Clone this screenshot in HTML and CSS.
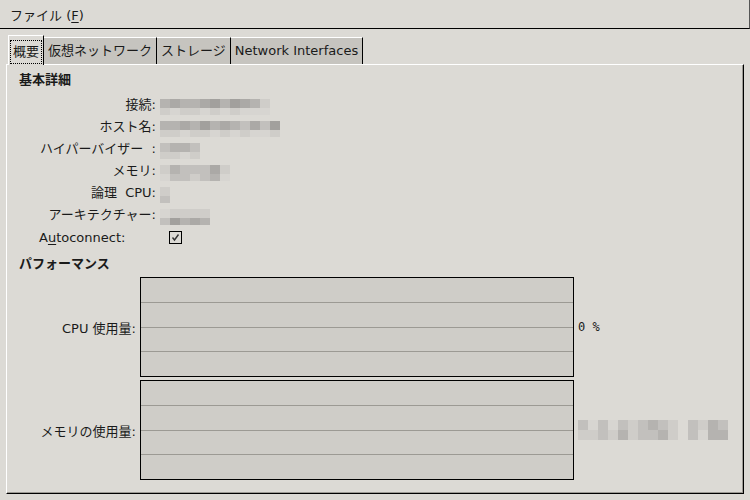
FILE: index.html
```html
<!DOCTYPE html>
<html lang="ja">
<head>
  <meta charset="UTF-8">
  <title>概要</title>
  <link rel="stylesheet" href="styles.css">
</head>
<body>
  <!-- メニューバー -->
  <div class="menubar">
    <span class="menu-item">ファイル (<u>F</u>)</span>
  </div>

  <!-- タブ -->
  <div class="tabs">
    <div class="tab active"><span class="focus">概要</span></div>
    <div class="tab">仮想ネットワーク</div>
    <div class="tab">ストレージ</div>
    <div class="tab">Network Interfaces</div>
  </div>

  <div class="panel">
    <div class="section-title">基本詳細</div>

    <div class="details">
      <div class="label">接続:</div>
      <div class="value">
        <span class="blur">
          <span class="row"><i class="p3"></i><i class="p4"></i><i class="p3"></i><i class="p3"></i><i class="p4"></i><i class="p5"></i><i class="p3"></i><i class="p5"></i><i class="p4"></i><i class="p3"></i><i class="p1"></i></span>
          <span class="row"><i class="p1"></i><i class="p0"></i><i class="p1"></i><i class="p1"></i><i class="p0"></i><i class="p1"></i><i class="p0"></i><i class="p1"></i><i class="p0"></i><i class="p0"></i><i class="p0"></i></span>
        </span>
      </div>

      <div class="label">ホスト名:</div>
      <div class="value">
        <span class="blur">
          <span class="row"><i class="p3"></i><i class="p3"></i><i class="p4"></i><i class="p3"></i><i class="p5"></i><i class="p3"></i><i class="p4"></i><i class="p3"></i><i class="p2"></i><i class="p4"></i><i class="p2"></i><i class="p5"></i></span>
          <span class="row"><i class="p1"></i><i class="p1"></i><i class="p0"></i><i class="p1"></i><i class="p1"></i><i class="p0"></i><i class="p1"></i><i class="p0"></i><i class="p1"></i><i class="p0"></i><i class="p0"></i><i class="p1"></i></span>
        </span>
      </div>

      <div class="label">ハイパーバイザー&nbsp; :</div>
      <div class="value">
        <span class="blur">
          <span class="row"><i class="p2"></i><i class="p3"></i><i class="p3"></i><i class="p2"></i></span>
          <span class="row"><i class="p1"></i><i class="p1"></i><i class="p0"></i><i class="p1"></i></span>
        </span>
      </div>

      <div class="label">メモリ:</div>
      <div class="value">
        <span class="blur">
          <span class="row"><i class="p1"></i><i class="p3"></i><i class="p2"></i><i class="p2"></i><i class="p2"></i><i class="p4"></i><i class="p1"></i></span>
          <span class="row"><i class="p0"></i><i class="p2"></i><i class="p2"></i><i class="p1"></i><i class="p2"></i><i class="p3"></i><i class="p0"></i></span>
        </span>
      </div>

      <div class="label">論理&nbsp; CPU:</div>
      <div class="value">
        <span class="blur">
          <span class="row"><i class="p1"></i></span>
          <span class="row"><i class="p2"></i></span>
        </span>
      </div>

      <div class="label">アーキテクチャー:</div>
      <div class="value">
        <span class="blur">
          <span class="row"><i class="p0"></i><i class="p1"></i><i class="p1"></i><i class="p1"></i><i class="p1"></i></span>
          <span class="row"><i class="p2"></i><i class="p5"></i><i class="p3"></i><i class="p4"></i><i class="p3"></i></span>
        </span>
      </div>
    </div>

    <div class="autoconnect">
      <span class="auto-label">A<u>u</u>toconnect:</span>
      <span class="checkbox">
        <svg width="11" height="11" viewBox="0 0 11 11">
          <polyline points="2.5,5.5 4.5,8 8.5,2.5" fill="none" stroke="#333" stroke-width="1.4"/>
        </svg>
      </span>
    </div>

    <div class="section-title perf-title">パフォーマンス</div>

    <div class="perf">
      <div class="label">CPU 使用量:</div>
      <div class="graph">
        <div class="band"></div><div class="band"></div><div class="band"></div><div class="band"></div>
      </div>
      <div class="perf-value mono">0 %</div>

      <div class="label">メモリの使用量:</div>
      <div class="graph">
        <div class="band"></div><div class="band"></div><div class="band"></div><div class="band"></div>
      </div>
      <div class="perf-value">
        <span class="blur tall">
          <span class="row"><i class="p2"></i><i class="p0"></i><i class="p2"></i><i class="p0"></i><i class="p2"></i><i class="p1"></i><i class="p2"></i><i class="p3"></i><i class="p2"></i><i class="p1"></i><i class="gap"></i><i class="p2"></i><i class="p1"></i><i class="p3"></i><i class="p2"></i></span>
          <span class="row"><i class="p1"></i><i class="p1"></i><i class="p2"></i><i class="p1"></i><i class="p3"></i><i class="p1"></i><i class="p2"></i><i class="p2"></i><i class="p3"></i><i class="p1"></i><i class="gap"></i><i class="p2"></i><i class="p0"></i><i class="p3"></i><i class="p3"></i></span>
        </span>
      </div>
    </div>
  </div>
</body>
</html>
```

FILE: styles.css
```css
body {
  margin: 0;
  background: #dcdad5;
  color: #1a1a1a;
  font-family: "DejaVu Sans", "Noto Sans CJK JP", sans-serif;
  font-size: 13px;
  overflow: hidden;
}

u {
  text-decoration: underline;
  text-underline-offset: 2px;
}

.menubar {
  height: 28px;
  border-bottom: 1px solid #000;
  border-right: 1px solid #555;
  display: flex;
  align-items: center;
  padding-left: 10px;
}

.tabs {
  display: flex;
  align-items: flex-end;
  padding-top: 6px;
  margin-left: 8px;
  position: relative;
  z-index: 1;
}

.tab {
  height: 26px;
  line-height: 26px;
  padding: 0 4px;
  background: #c6c4bf;
  border-top: 1px solid #fff;
  border-right: 1px solid #000;
  white-space: nowrap;
}

.tab.active {
  height: 29px;
  padding: 0 1px;
  margin-bottom: -1px;
  background: #dcdad5;
  border-left: 1px solid #fff;
  display: flex;
  align-items: center;
}

.focus {
  border: 1px dotted #000;
  padding: 0 2px;
  height: 22px;
  line-height: 22px;
  margin-top: 2px;
}

.panel {
  margin: 0 6px;
  height: 430px;
  box-sizing: border-box;
  border-top: 1px solid #fff;
  border-left: 1px solid #fff;
  border-right: 1px solid #000;
  border-bottom: 1px solid #000;
  box-shadow: inset -1px -1px 0 #9c9a94;
  padding: 7px 0 0 12px;
}

.section-title {
  font-weight: bold;
  height: 16px;
  line-height: 16px;
}

.details {
  display: grid;
  grid-template-columns: 137px 1fr;
  column-gap: 4px;
  margin-top: 4px;
  grid-auto-rows: 22px;
}

.label {
  text-align: right;
  align-self: center;
  white-space: nowrap;
}

.value {
  padding-top: 7px;
}

/* ぼかした値 */
.blur {
  display: flex;
  flex-direction: column;
}

.blur .row {
  display: flex;
  height: 9px;
}

.blur .row + .row {
  height: 7px;
}

.blur.tall .row,
.blur.tall .row + .row {
  height: 10px;
}

.blur i {
  display: block;
  width: 10px;
}

.p0 { background: #d7d5d1; }
.p1 { background: #cfcdc9; }
.p2 { background: #c2c0bd; }
.p3 { background: #b5b3b0; }
.p4 { background: #aba9a6; }
.p5 { background: #a2a09d; }
.gap { background: transparent; }

.autoconnect {
  display: flex;
  align-items: center;
  height: 22px;
  margin-top: 2px;
}

.auto-label {
  margin-left: 20px;
}

.checkbox {
  width: 11px;
  height: 11px;
  border: 1px solid #000;
  margin-left: 44px;
  display: flex;
}

.perf-title {
  margin-top: 8px;
}

.perf {
  display: grid;
  grid-template-columns: 117px 434px 1fr;
  column-gap: 4px;
  row-gap: 3px;
  margin-top: 5px;
}

.graph {
  height: 100px;
  box-sizing: border-box;
  border: 1px solid #000;
  background: #cfcdc8;
  display: flex;
  flex-direction: column;
}

.band {
  flex: 1;
}

.band + .band {
  border-top: 1px solid #9c9a94;
}

.perf-value {
  align-self: center;
}

.mono {
  font-family: "DejaVu Sans Mono", monospace;
  font-size: 12px;
}
```
